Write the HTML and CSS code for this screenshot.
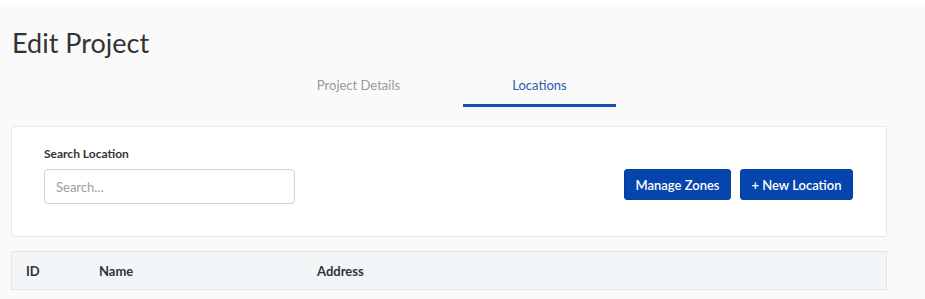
FILE: index.html
```html
<!DOCTYPE html>
<html>
<head>
<meta charset="utf-8">
<link rel="stylesheet" href="styles.css">
</head>
<body>
<div class="topbar"></div>
<main class="page">
  <h1 class="title">Edit Project</h1>
  <nav class="tabs">
    <div class="tab">Project Details</div>
    <div class="tab active">Locations</div>
  </nav>
  <section class="card">
    <div class="search">
      <label class="label" for="s">Search Location</label>
      <input id="s" class="input" type="text" placeholder="Search...">
    </div>
    <div class="actions">
      <button class="btn">Manage Zones</button>
      <button class="btn">+ New Location</button>
    </div>
  </section>
  <div class="thead">
    <div class="th th-id">ID</div>
    <div class="th th-name">Name</div>
    <div class="th th-addr">Address</div>
  </div>
</main>
</body>
</html>
```
FILE: styles.css
```css
* { box-sizing: border-box; }
html, body { margin: 0; padding: 0; }
body {
  font-family: Lato, "Open Sans", sans-serif;
  background: #fafafa;
  color: #333;
  width: 925px;
  height: 299px;
  overflow: hidden;
}
.topbar { height: 5px; background: #fff; }
.page { padding: 0 38px 0 11px; }
.title {
  margin: 0;
  padding: 21px 0 0 1px;
  font-size: 27px;
  font-weight: 400;
  line-height: 34px;
  color: #333;
}
.tabs {
  display: flex;
  justify-content: center;
  gap: 28px;
  margin-top: 17px;
}
.tab {
  width: 153px;
  text-align: center;
  font-size: 13px;
  color: #999;
  height: 30px;
  line-height: 16px;
}
.tab.active {
  color: #2c5cb3;
  border-bottom: 3px solid #1450b4;
}
.card {
  margin-top: 19px;
  height: 111px;
  background: #fff;
  border: 1px solid #e4e7eb;
  border-radius: 3px;
  padding: 20px 33px 0 32px;
  display: flex;
  justify-content: space-between;
  align-items: flex-start;
}
.search { display: flex; flex-direction: column; }
.label {
  font-size: 12px;
  font-weight: 700;
  color: #333;
  line-height: 14px;
  margin-bottom: 8px;
}
.input {
  width: 251px;
  height: 35px;
  border: 1px solid #c9d6e3;
  border-radius: 4px;
  padding: 0 11px;
  font-family: Lato, sans-serif;
  font-size: 13px;
  color: #333;
  outline: none;
}
.input::placeholder { color: #9aa0a6; }
.actions { display: flex; gap: 9px; margin-top: 22px; }
.btn {
  height: 31px;
  padding: 0;
  background: #0645ad;
  border: 1px solid #0a3f97;
  border-radius: 3px;
  color: #fff;
  font-family: Lato, sans-serif;
  font-size: 13px;
  font-weight: 600;
  white-space: nowrap;
}
.btn:first-child { width: 107px; }
.btn:last-child { width: 113px; }
.thead {
  margin-top: 14px;
  height: 39px;
  background: #f3f6f9;
  border: 1px solid #e2e6ea;
  display: flex;
  align-items: center;
  font-size: 13px;
  font-weight: 700;
  color: #333;
}
.th-id { width: 87px; padding-left: 14px; }
.th-name { width: 218px; }
.th-addr { flex: 1; }
```
